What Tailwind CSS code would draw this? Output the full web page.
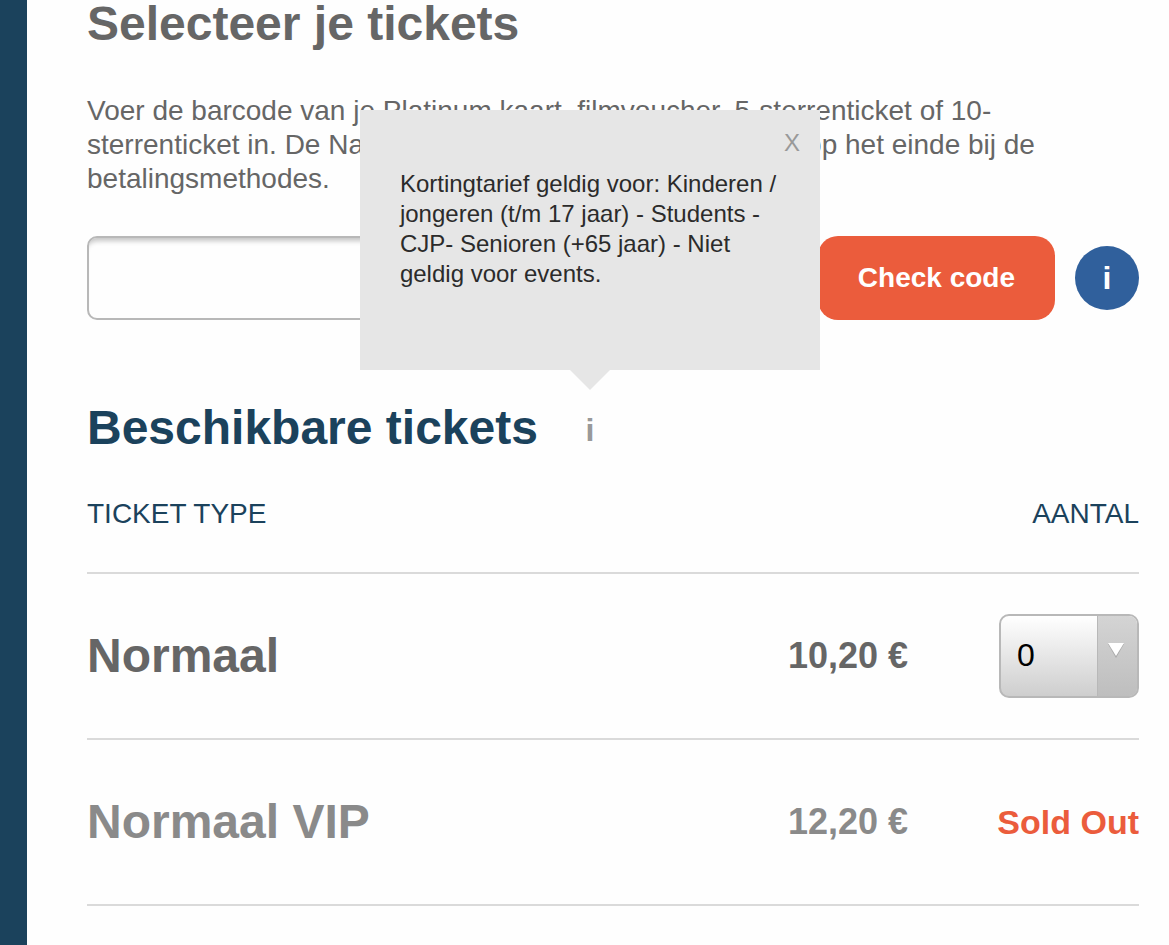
<!DOCTYPE html>
<html lang="nl">
  <head>
    <meta charset="UTF-8" />
    <meta name="viewport" content="width=device-width, initial-scale=1.0" />
    <title>Selecteer je tickets</title>
    <script src="https://cdn.jsdelivr.net/npm/@tailwindcss/browser@4"></script>
  </head>

  <body class="bg-[#fefefe] font-['Liberation_Sans',Arial,sans-serif] text-[#666] antialiased">
    <main class="min-h-screen border-l-[27px] border-[#1b425c] pl-[60px] pr-[30px]">
      <h1 class="text-5xl leading-[48px] font-bold">Selecteer je tickets</h1>

      <p class="mt-[46px] text-[28px] leading-[34px]">
        Voer de barcode van je Platinum kaart, filmvoucher, 5-sterrenticket of 10-sterrenticket in.
        De Nationale Bioscoopbon gebruik je pas op het einde bij de betalingsmethodes.
      </p>

      <!-- Barcode -->
      <form class="mt-10 flex items-center gap-5">
        <input
          type="text"
          aria-label="Barcode"
          class="h-[84px] min-w-0 flex-1 rounded-[10px] border-2 border-[#b8b8b8] bg-[#fefefe] px-4 text-[28px] shadow-[inset_0_7px_5px_-4px_#c4c4c4]"
        />
        <button type="button" class="h-[84px] rounded-[20px] bg-[#eb5c3c] px-10 text-[28px] font-bold text-white">Check code</button>
        <button type="button" aria-label="Info barcode" class="size-16 rounded-full bg-[#30609c] text-[32px] font-bold text-white">i</button>
      </form>

      <!-- Titel met tooltip -->
      <div class="mt-[84px] flex items-end gap-5">
        <h2 class="text-5xl leading-[48px] font-bold text-[#1b425c]">Beschikbare tickets</h2>
        <div class="relative">
          <button type="button" aria-describedby="tarief" class="block w-16 text-[32px] leading-11 font-bold text-[#999]">i</button>

          <div id="tarief" role="tooltip" class="absolute bottom-full left-1/2 mb-[38px] h-[260px] w-[460px] -translate-x-1/2 bg-[#e6e6e6] px-5 pt-[18px] text-2xl leading-[30px] text-[#2b2b2b]">
            <button type="button" aria-label="Sluiten" class="ml-auto block text-[#999]">X</button>
            <p class="mt-[11px] px-5">
              Kortingtarief geldig voor: Kinderen / jongeren (t/m 17 jaar) - Students - CJP- Senioren (+65 jaar) - Niet geldig voor events.
            </p>
            <svg class="absolute top-full left-1/2 h-5 w-10 -translate-x-1/2" viewBox="0 0 40 20" fill="#e6e6e6">
              <path d="M0 0h40L20 20z" />
            </svg>
          </div>
        </div>
      </div>

      <!-- Tickets -->
      <table class="mt-[3px] w-full">
        <thead class="text-[28px] text-[#1b425c]">
          <tr class="h-[118px] border-b-2 border-[#dadada]">
            <th scope="col" colspan="2" class="text-left font-normal">TICKET TYPE</th>
            <th scope="col" class="w-[231px] text-right font-normal">AANTAL</th>
          </tr>
        </thead>
        <tbody class="font-bold">
          <tr class="h-[166px] border-b-2 border-[#dadada]">
            <td class="text-5xl">Normaal</td>
            <td class="text-right text-4xl">10,20 €</td>
            <td>
              <div class="relative ml-auto h-[84px] w-[140px]">
                <select aria-label="Aantal Normaal" class="size-full appearance-none rounded-[10px] border-2 border-[#b8b8b8] bg-linear-to-b from-white to-[#cecece] pl-4 pb-0.5 text-[32px] font-normal text-black">
                  <option>0</option>
                  <option>1</option>
                  <option>2</option>
                  <option>3</option>
                  <option>4</option>
                </select>
                <span class="pointer-events-none absolute inset-y-0.5 right-0.5 w-10 rounded-r-lg border-l border-[#b8b8b8] bg-linear-to-b from-[#d4d4d4] to-[#bebebe]">
                  <svg class="ml-[9px] mt-[26px] h-4 w-[18px]" viewBox="0 0 18 16">
                    <path d="M1 2h16L9 16z" fill="#a8a8a8" />
                    <path d="M1 1h16L9 14z" fill="#fff" />
                  </svg>
                </span>
              </div>
            </td>
          </tr>
          <tr class="h-[166px] border-b-2 border-[#dadada] text-[#8a8a8a]">
            <td class="text-5xl">Normaal VIP</td>
            <td class="text-right text-4xl">12,20 €</td>
            <td class="text-right text-[34px] text-[#eb5c3c]">Sold Out</td>
          </tr>
        </tbody>
      </table>
    </main>
  </body>
</html>
